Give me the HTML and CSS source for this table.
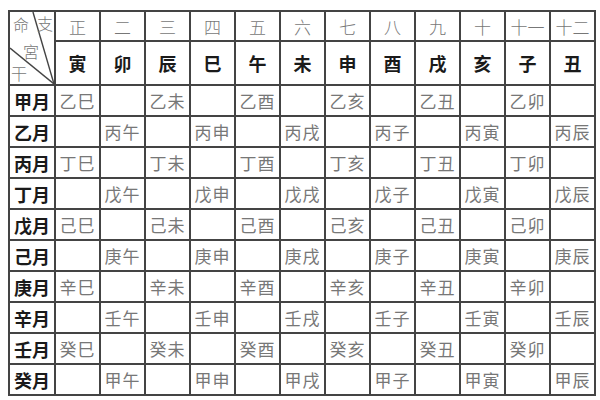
FILE: index.html
```html
<!DOCTYPE html>
<html lang="zh">
<head>
<meta charset="utf-8">
<link rel="stylesheet" href="styles.css">
</head>
<body>
<table class="chart">
  <colgroup>
    <col class="c-first">
    <col span="12" class="c-month">
  </colgroup>
  <thead>
    <tr class="r-num">
      <th class="corner" rowspan="2">
        <svg class="diag" viewBox="0 0 46 74" preserveAspectRatio="none">
          <line x1="24" y1="0" x2="46" y2="74"/>
          <line x1="0" y1="37" x2="46" y2="74"/>
        </svg>
        <span class="k k-ming">命</span>
        <span class="k k-zhi">支</span>
        <span class="k k-gong">宮</span>
        <span class="k k-gan">干</span>
      </th>
      <th>正</th><th>二</th><th>三</th><th>四</th><th>五</th><th>六</th><th>七</th><th>八</th><th>九</th><th>十</th><th>十一</th><th>十二</th>
    </tr>
    <tr class="r-branch">
      <th>寅</th><th>卯</th><th>辰</th><th>巳</th><th>午</th><th>未</th><th>申</th><th>酉</th><th>戌</th><th>亥</th><th>子</th><th>丑</th>
    </tr>
  </thead>
  <tbody>
    <tr><th>甲月</th><td>乙巳</td><td></td><td>乙未</td><td></td><td>乙酉</td><td></td><td>乙亥</td><td></td><td>乙丑</td><td></td><td>乙卯</td><td></td></tr>
    <tr><th>乙月</th><td></td><td>丙午</td><td></td><td>丙申</td><td></td><td>丙戌</td><td></td><td>丙子</td><td></td><td>丙寅</td><td></td><td>丙辰</td></tr>
    <tr><th>丙月</th><td>丁巳</td><td></td><td>丁未</td><td></td><td>丁酉</td><td></td><td>丁亥</td><td></td><td>丁丑</td><td></td><td>丁卯</td><td></td></tr>
    <tr><th>丁月</th><td></td><td>戊午</td><td></td><td>戊申</td><td></td><td>戊戌</td><td></td><td>戊子</td><td></td><td>戊寅</td><td></td><td>戊辰</td></tr>
    <tr><th>戊月</th><td>己巳</td><td></td><td>己未</td><td></td><td>己酉</td><td></td><td>己亥</td><td></td><td>己丑</td><td></td><td>己卯</td><td></td></tr>
    <tr><th>己月</th><td></td><td>庚午</td><td></td><td>庚申</td><td></td><td>庚戌</td><td></td><td>庚子</td><td></td><td>庚寅</td><td></td><td>庚辰</td></tr>
    <tr><th>庚月</th><td>辛巳</td><td></td><td>辛未</td><td></td><td>辛酉</td><td></td><td>辛亥</td><td></td><td>辛丑</td><td></td><td>辛卯</td><td></td></tr>
    <tr><th>辛月</th><td></td><td>壬午</td><td></td><td>壬申</td><td></td><td>壬戌</td><td></td><td>壬子</td><td></td><td>壬寅</td><td></td><td>壬辰</td></tr>
    <tr><th>壬月</th><td>癸巳</td><td></td><td>癸未</td><td></td><td>癸酉</td><td></td><td>癸亥</td><td></td><td>癸丑</td><td></td><td>癸卯</td><td></td></tr>
    <tr><th>癸月</th><td></td><td>甲午</td><td></td><td>甲申</td><td></td><td>甲戌</td><td></td><td>甲子</td><td></td><td>甲寅</td><td></td><td>甲辰</td></tr>
  </tbody>
</table>
</body>
</html>
```
FILE: styles.css
```css
html, body {
  background: #ffffff;
}
body {
  margin: 10px 0 0 8px;
  font-family: "Noto Sans CJK TC", "Noto Sans CJK SC", sans-serif;
}
.chart {
  border-collapse: collapse;
  table-layout: fixed;
  width: 588px;
}
.c-first { width: 46px; }
.c-month { width: 45px; }
.chart th, .chart td {
  border: 2px solid #444444;
  padding: 0;
  text-align: center;
  vertical-align: middle;
  white-space: nowrap;
  overflow: hidden;
  line-height: 1;
}
.r-num th {
  height: 28px;
  font-size: 17px;
  font-weight: 300;
  color: #777777;
}
.r-branch th {
  height: 42px;
  font-size: 18px;
  font-weight: 700;
  color: #1a1a1a;
}
tbody tr th, tbody tr td {
  height: 29px;
}
tbody th {
  font-size: 18px;
  font-weight: 700;
  color: #1a1a1a;
}
tbody td {
  font-size: 17px;
  font-weight: 400;
  color: #777777;
  letter-spacing: 1px;
}
.corner {
  position: relative;
}
.diag {
  position: absolute;
  left: 0;
  top: 0;
  width: 100%;
  height: 100%;
}
.diag line {
  stroke: #444444;
  stroke-width: 1.4;
  vector-effect: non-scaling-stroke;
}
.k {
  position: absolute;
  font-size: 16px;
  font-weight: 300;
  color: #777777;
  line-height: 1;
}
.k-ming { left: 3px; top: 4px; }
.k-zhi { left: 27px; top: 3px; }
.k-gong { left: 13px; top: 31px; }
.k-gan { left: 1px; top: 53px; }
```
